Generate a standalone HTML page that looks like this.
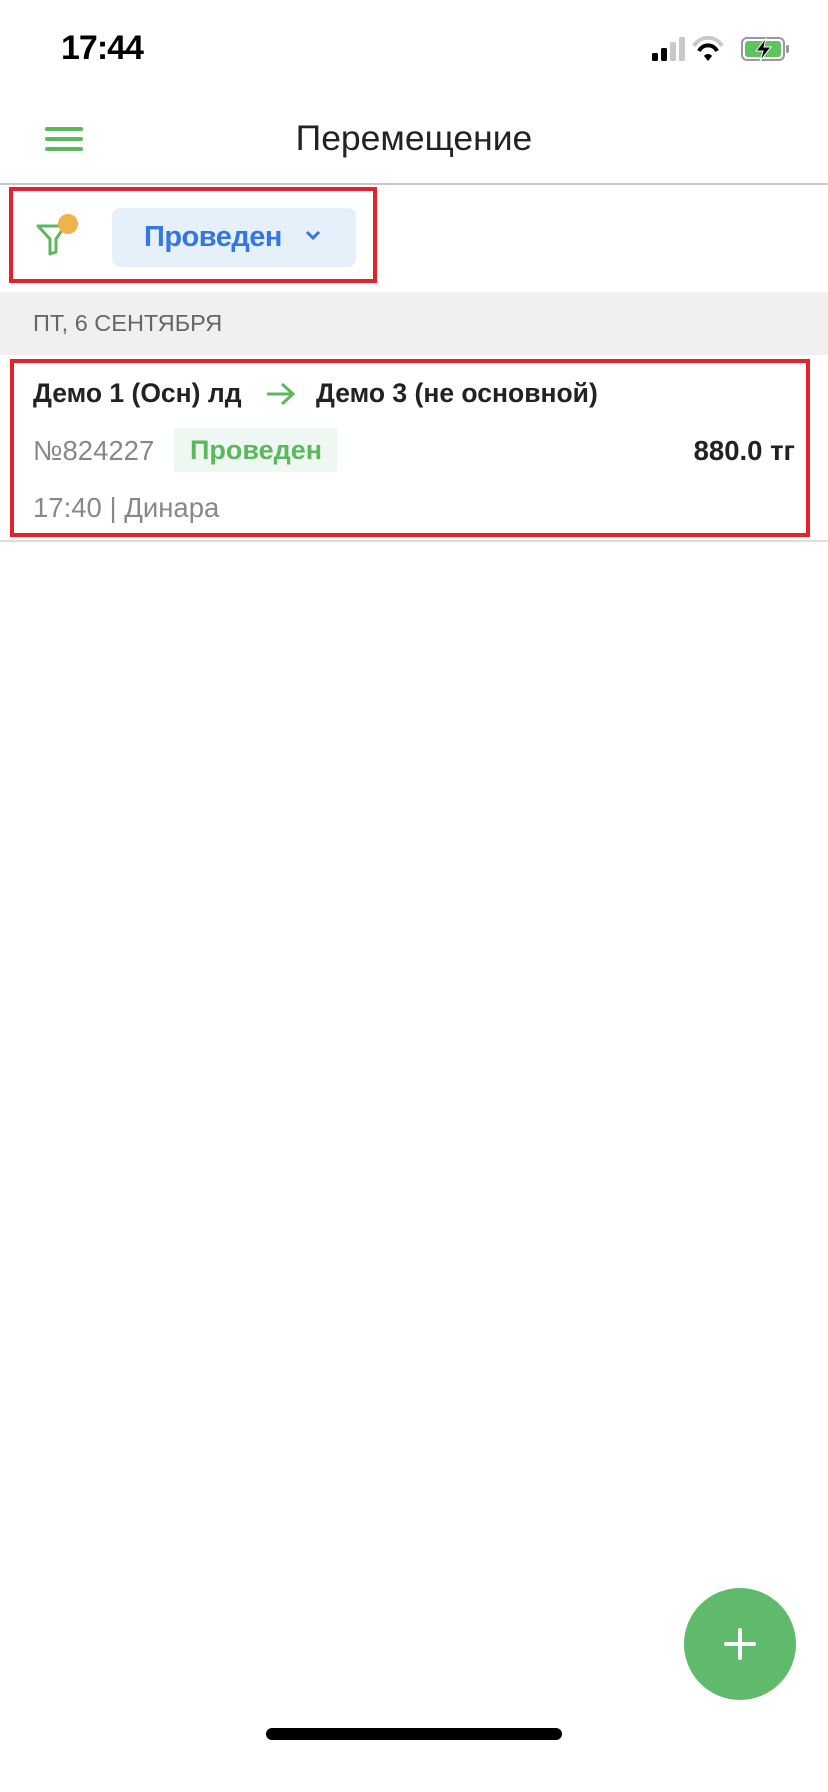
<!DOCTYPE html>
<html><head><meta charset="utf-8"><style>
*{margin:0;padding:0;box-sizing:border-box}
body{width:828px;height:1792px;background:#fff;position:relative;overflow:hidden;font-family:"Liberation Sans",sans-serif}
.a{position:absolute;white-space:nowrap}
</style></head><body>
<div class="a" style="left:61px;top:29px;font-size:34px;font-weight:bold;color:#000;letter-spacing:-1px">17:44</div>
<svg class="a" style="left:650px;top:36px" width="142" height="28" viewBox="0 0 142 28">
<rect x="2" y="17" width="6" height="8" rx="1.5" fill="#000"/><rect x="11" y="12" width="6" height="13" rx="1.5" fill="#000"/><rect x="20" y="6" width="6" height="19" rx="1.5" fill="#c8c8c8"/><rect x="29" y="1" width="6" height="24" rx="1.5" fill="#c8c8c8"/>
<path d="M44 10 A16 16 0 0 1 72 10" stroke="#c8c8c8" stroke-width="4" fill="none"/><path d="M49 15 A10 10 0 0 1 67 15" stroke="#000" stroke-width="4" fill="none"/><path d="M54 20 L58 25 L62 20 A5 5 0 0 0 54 20Z" fill="#000"/>
<rect x="92" y="2" width="42" height="22" rx="5" fill="none" stroke="#999" stroke-width="2"/><rect x="95" y="5" width="36" height="16" rx="3" fill="#5fc35f"/><rect x="136" y="9" width="3" height="8" rx="1.5" fill="#999"/>
<path d="M116 2 L106 15 L113 15 L110 25 L121 11 L114 11 Z" fill="#000" stroke="#fff" stroke-width="1"/>
</svg>
<svg class="a" style="left:45px;top:126px" width="38" height="26"><g stroke="#5cb85c" stroke-width="4" stroke-linecap="round"><line x1="2" y1="3" x2="36" y2="3"/><line x1="2" y1="13" x2="36" y2="13"/><line x1="2" y1="23" x2="36" y2="23"/></g></svg>
<div class="a" style="left:0;width:828px;text-align:center;top:118px;font-size:35.5px;color:#222">Перемещение</div>
<div class="a" style="left:0;top:183px;width:828px;height:2px;background:#c8c8c8"></div>
<div class="a" style="left:9px;top:187px;width:368px;height:96px;border:4px solid #e8202a"></div>
<svg class="a" style="left:34px;top:210px" width="48" height="48" viewBox="0 0 48 48"><path d="M4 16 L31 16 L22 29 L22 42 L16 44 L16 29 Z" fill="none" stroke="#5cb85c" stroke-width="3" stroke-linejoin="round"/><circle cx="34" cy="14" r="10" fill="#f0b24a"/></svg>
<div class="a" style="left:112px;top:208px;width:244px;height:59px;background:#e6f0fb;border-radius:8px"></div>
<div class="a" style="left:144px;top:221px;font-size:29px;color:#3576e0;font-weight:bold;letter-spacing:-0.5px">Проведен</div>
<svg class="a" style="left:304px;top:229px" width="18" height="14"><path d="M3 3 L9 9 L15 3" fill="none" stroke="#3576e0" stroke-width="3"/></svg>
<div class="a" style="left:0;top:292px;width:828px;height:63px;background:#f0f0f0"></div>
<div class="a" style="left:33px;top:310px;font-size:23.5px;color:#666">ПТ, 6 СЕНТЯБРЯ</div>
<div class="a" style="left:10px;top:359px;width:800px;height:178px;border:4px solid #e8202a"></div>
<div class="a" style="left:33px;top:378px;font-size:26.5px;font-weight:bold;color:#222">Демо 1 (Осн) лд</div>
<svg class="a" style="left:265px;top:381px" width="32" height="26"><path d="M2 13 L28 13 M17 3 L28 13 L17 23" fill="none" stroke="#5cb85c" stroke-width="3"/></svg>
<div class="a" style="left:316px;top:378px;font-size:26.5px;font-weight:bold;color:#222">Демо 3 (не основной)</div>
<div class="a" style="left:33px;top:435px;font-size:27.5px;color:#888">№824227</div>
<div class="a" style="left:174px;top:428px;width:163px;height:44px;background:#eef7f2"></div>
<div class="a" style="left:190px;top:435px;font-size:27px;color:#5cb85c;font-weight:bold">Проведен</div>
<div class="a" style="right:33px;top:435px;font-size:27.5px;font-weight:bold;color:#222">880.0 тг</div>
<div class="a" style="left:33px;top:492px;font-size:27.5px;color:#888">17:40 | Динара</div>
<div class="a" style="left:0;top:540px;width:828px;height:2px;background:#ddd"></div>
<div class="a" style="left:684px;top:1588px;width:112px;height:112px;border-radius:50%;background:#5fbb6b"></div>
<div class="a" style="left:724px;top:1642px;width:32px;height:4px;border-radius:2px;background:#fff"></div>
<div class="a" style="left:738px;top:1628px;width:4px;height:32px;border-radius:2px;background:#fff"></div>
<div class="a" style="left:266px;top:1728px;width:296px;height:12px;border-radius:6px;background:#000"></div>
</body></html>
